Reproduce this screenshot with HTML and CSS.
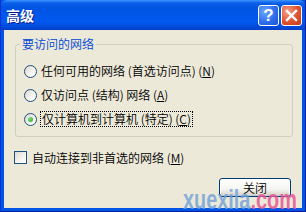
FILE: index.html
```html
<!DOCTYPE html>
<html>
<head>
<meta charset="utf-8">
<link rel="stylesheet" href="styles.css">
</head>
<body>
<div class="window">
  <div class="titlebar">
    <span class="title">高级</span>
    <div class="tbtns">
      <span class="tbtn help">?</span>
      <span class="tbtn close">
        <svg width="13" height="13" viewBox="0 0 13 13"><path d="M2 2L11 11M11 2L2 11" stroke="#fff" stroke-width="2.4" stroke-linecap="square"/></svg>
      </span>
    </div>
  </div>
  <div class="client">
    <fieldset class="group">
      <legend class="legend">要访问的网络</legend>
      <div class="row"><span class="radio"></span><span class="lbl">任何可用的网络 (首选访问点) (<u>N</u>)</span></div>
      <div class="row"><span class="radio"></span><span class="lbl">仅访问点 (结构) 网络 (<u>A</u>)</span></div>
      <div class="row"><span class="radio checked"></span><span class="lbl focus">仅计算机到计算机 (特定) (<u>C</u>)</span></div>
    </fieldset>
    <div class="checkrow"><span class="check"></span><span class="lbl">自动连接到非首选的网络 (<u>M</u>)</span></div>
    <div class="footer"><button class="btn">关闭</button></div>
  </div>
  <div class="watermark"><span class="wm1">xuexila</span><span class="wm2">.com</span></div>
</div>
</body>
</html>
```
FILE: styles.css
```css
html, body { margin: 0; padding: 0; }
body { width: 306px; height: 212px; overflow: hidden; background: #fff; }
.window {
  position: relative;
  width: 306px; height: 212px;
  box-sizing: border-box;
  overflow: hidden;
  display: flex; flex-direction: column;
  background: #0055e5;
  border-left: 1px solid #0831d9;
  border-right: 1px solid #001ea0;
  border-bottom: 1px solid #001ea0;
  font-family: "Noto Sans CJK SC", "Liberation Sans", sans-serif;
  font-size: 12px;
  font-weight: 350;
  color: #000;
}
.titlebar {
  height: 30px;
  flex: none;
  display: flex; align-items: center; justify-content: space-between;
  padding: 0 4px 0 6px;
  background: linear-gradient(to bottom, #3d95ff 0px, #0a5fe8 3px, #0054e3 8px, #0058ee 22px, #0046d5 28px, #003dc4 30px);
  border-radius: 7px 7px 0 0;
  margin: 0 -1px;
}
.title {
  color: #fff; font-weight: bold; font-size: 14px;
  text-shadow: 1px 1px 0 #0a1e8c;
  line-height: 16px;
  margin-top: -1px;
}
.tbtns { display: flex; gap: 2px; }
.tbtn {
  width: 21px; height: 21px; box-sizing: border-box;
  border: 1px solid #fff; border-radius: 3px;
  display: flex; align-items: center; justify-content: center;
  color: #fff;
}
.help {
  background: radial-gradient(circle at 30% 30%, #6aa6ff, #2a6bea 60%, #1d55d0);
  font-family: "Liberation Sans", sans-serif; font-weight: bold; font-size: 17px; line-height: 1;
}
.close {
  background: radial-gradient(circle at 30% 30%, #f3a08a, #e0522f 55%, #c9381a);
}
.client {
  flex: 1;
  margin: 0 3px 3px 3px;
  background: #ece9d8;
  display: flex; flex-direction: column;
  padding: 0 11px 0 11px;
}
.group {
  margin: 7px 0 0 0;
  width: 278px; box-sizing: border-box;
  border: 1px solid #d0d0bf; border-radius: 3px;
  padding: 8px 4px 5px 4px;
}
.legend {
  padding: 0 2px;
  color: #0046d5;
  line-height: 14px;
  height: 14px;
}
.row {
  height: 24px;
  display: flex; align-items: center;
  padding-left: 4px;
}
.radio {
  width: 13px; height: 13px; box-sizing: border-box;
  border-radius: 50%;
  border: 1px solid #1c5180;
  background: linear-gradient(135deg, #dcd9cf 0%, #f5f4ef 60%, #ffffff 100%);
  margin-right: 4px;
  display: flex; align-items: center; justify-content: center;
  flex: none;
}
.radio.checked::after {
  content: "";
  width: 5px; height: 5px; border-radius: 50%;
  background: radial-gradient(circle at 35% 35%, #7ce37c, #21a121);
}
.lbl { line-height: 14px; white-space: nowrap; }
.lbl u { text-decoration: underline; }
.focus { outline: 1px dotted #000; outline-offset: 0; padding: 0 1px; }
.checkrow {
  display: flex; align-items: center;
  height: 13px;
  margin-top: 14px;
  margin-left: -1px;
}
.check {
  width: 13px; height: 13px; box-sizing: border-box;
  border: 1px solid #1c5180;
  background: linear-gradient(135deg, #dcd9cf 0%, #f5f4ef 60%, #ffffff 100%);
  margin-right: 5px;
  flex: none;
}
.footer {
  display: flex; justify-content: flex-end;
  margin-top: 14px;
}
.btn {
  width: 72px; height: 19px;
  padding: 0;
  border: 1px solid #003c74; border-radius: 3px;
  background: linear-gradient(to bottom, #ffffff 0%, #f4f4f0 60%, #d6d0c5 100%);
  box-shadow: inset 0 -1px 0 #c1ccd1, inset 0 0 0 1px #fff;
  font-family: "Noto Sans CJK SC", sans-serif; font-size: 12px; font-weight: 350; line-height: 15px;
  color: #000;
}
.watermark {
  position: absolute;
  left: 182px; top: 185px;
  font-family: "Liberation Sans", sans-serif; font-weight: bold; font-size: 28px;
  line-height: 30px;
  white-space: nowrap;
  transform: scaleX(0.71);
  transform-origin: 0 0;
}
.wm1 { color: rgba(110, 160, 218, 0.8); }
.wm2 { color: rgba(232, 85, 150, 0.85); }
```
